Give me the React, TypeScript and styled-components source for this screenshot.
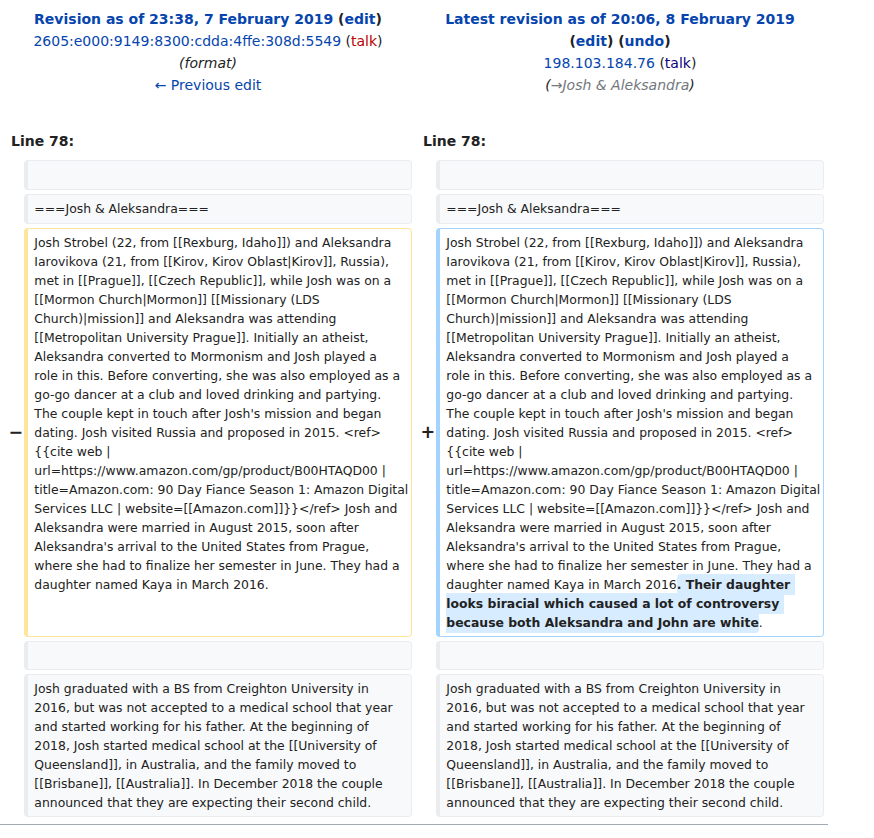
import React from 'react';
import styled, { createGlobalStyle } from 'styled-components';

const Global = createGlobalStyle`
  html, body { margin: 0; padding: 0; background: #ffffff; }
  body { font-family: "DejaVu Sans", "Noto Sans", sans-serif; color: #222222; }
`;

const Page = styled.div`
  width: 828px;
`;

const DiffGrid = styled.div`
  display: grid;
  grid-template-columns: minmax(0, 2fr) minmax(0, 48fr) minmax(0, 2fr) minmax(0, 48fr);
  gap: 4px;
  padding: 4px;
  font-size: 14px;
`;

const TitleCell = styled.div`
  grid-column: span 2;
  text-align: center;
  padding: 4px 7px 25px;
  line-height: 22px;
  font-size: 14px;
`;

const TitleLine = styled.div``;

const Strong = styled.strong`
  font-weight: bold;
`;

const Link = styled.a<{ $tone?: 'blue' | 'red' | 'visited' }>`
  text-decoration: none;
  cursor: pointer;
  color: ${(p) => (p.$tone === 'red' ? '#ba0000' : p.$tone === 'visited' ? '#0b0080' : '#0645ad')};
`;

const Comment = styled.span`
  font-style: italic;
  color: #222222;
`;

const AutoComment = styled.span`
  color: #72777d;
`;

const LineNo = styled.div`
  grid-column: span 2;
  font-weight: bold;
  padding: 4.6px 7px;
  line-height: 22px;
  font-size: 14px;
`;

const Marker = styled.div`
  align-self: center;
  padding: 4.375px;
  text-align: right;
  font-weight: bold;
  font-size: 17.5px;
  line-height: 21px;
  color: #222222;
  white-space: nowrap;
`;

type Kind = 'context' | 'deleted' | 'added';

const borderFor = (k: Kind) => (k === 'deleted' ? '#ffe49c' : k === 'added' ? '#a3d3ff' : '#eaecf0');

const Content = styled.div<{ $kind: Kind }>`
  font-size: 12.4px;
  line-height: 19px;
  padding: 4px 6.2px;
  border-style: solid;
  border-width: 1px 1px 1px 4px;
  border-color: ${(p) => borderFor(p.$kind)};
  border-radius: 4.1px;
  background: ${(p) => (p.$kind === 'context' ? '#f8f9fa' : '#ffffff')};
  color: #222222;
  white-space: pre;
`;

const Inserted = styled.ins`
  text-decoration: none;
  font-weight: bold;
  background: #d8ecff;
  padding: 0.25em 0;
  border-radius: 0.33em;
`;

const Rule = styled.hr`
  height: 1px;
  border: 0;
  background: #a2a9b1;
  margin: 2.8px 0 0;
  width: 828px;
`;

const mainLines = [
  'Josh Strobel (22, from [[Rexburg, Idaho]]) and Aleksandra',
  'Iarovikova (21, from [[Kirov, Kirov Oblast|Kirov]], Russia),',
  'met in [[Prague]], [[Czech Republic]], while Josh was on a',
  '[[Mormon Church|Mormon]] [[Missionary (LDS',
  'Church)|mission]] and Aleksandra was attending',
  '[[Metropolitan University Prague]]. Initially an atheist,',
  'Aleksandra converted to Mormonism and Josh played a',
  'role in this. Before converting, she was also employed as a',
  'go-go dancer at a club and loved drinking and partying.',
  "The couple kept in touch after Josh's mission and began",
  'dating. Josh visited Russia and proposed in 2015. <ref>',
  '{{cite web |',
  'url=https://www.amazon.com/gp/product/B00HTAQD00 |',
  'title=Amazon.com: 90 Day Fiance Season 1: Amazon Digital',
  'Services LLC | website=[[Amazon.com]]}}</ref> Josh and',
  'Aleksandra were married in August 2015, soon after',
  "Aleksandra's arrival to the United States from Prague,",
  'where she had to finalize her semester in June. They had a',
  'daughter named Kaya in March 2016',
];

const mainText = mainLines.join('\n');

const addedText =
  '. Their daughter \nlooks biracial which caused a lot of controversy \nbecause both Aleksandra and John are white';

const lastLines = [
  'Josh graduated with a BS from Creighton University in',
  '2016, but was not accepted to a medical school that year',
  'and started working for his father. At the beginning of',
  '2018, Josh started medical school at the [[University of',
  'Queensland]], in Australia, and the family moved to',
  '[[Brisbane]], [[Australia]]. In December 2018 the couple',
  'announced that they are expecting their second child.',
];

const lastText = lastLines.join('\n');

const ContextRow: React.FC<{ text?: string }> = ({ text }) => (
  <>
    <Marker>{'\u00a0'}</Marker>
    <Content $kind="context">{text ? text : <br />}</Content>
    <Marker>{'\u00a0'}</Marker>
    <Content $kind="context">{text ? text : <br />}</Content>
  </>
);

export default function App() {
  return (
    <Page>
      <Global />
      <DiffGrid>
        <TitleCell>
          <TitleLine>
            <Strong>
              <Link>Revision as of 23:38, 7 February 2019</Link> (<Link>edit</Link>)
            </Strong>
          </TitleLine>
          <TitleLine>
            <Link>2605:e000:9149:8300:cdda:4ffe:308d:5549</Link> (<Link $tone="red">talk</Link>)
          </TitleLine>
          <TitleLine>
            <Comment>(format)</Comment>
          </TitleLine>
          <TitleLine>
            <Link>← Previous edit</Link>
          </TitleLine>
        </TitleCell>
        <TitleCell>
          <TitleLine>
            <Strong>
              <Link>Latest revision as of 20:06, 8 February 2019</Link> (<Link>edit</Link>) (<Link>undo</Link>)
            </Strong>
          </TitleLine>
          <TitleLine>
            <Link>198.103.184.76</Link> (<Link $tone="visited">talk</Link>)
          </TitleLine>
          <TitleLine>
            <Comment>
              (<AutoComment>→Josh &amp; Aleksandra</AutoComment>)
            </Comment>
          </TitleLine>
        </TitleCell>

        <LineNo>Line 78:</LineNo>
        <LineNo>Line 78:</LineNo>

        <ContextRow />
        <ContextRow text="===Josh & Aleksandra===" />

        <Marker>−</Marker>
        <Content $kind="deleted">{mainText + '.'}</Content>
        <Marker>+</Marker>
        <Content $kind="added">
          {mainText}
          <Inserted>{addedText}</Inserted>.
        </Content>

        <ContextRow />
        <ContextRow text={lastText} />
      </DiffGrid>
      <Rule />
    </Page>
  );
}
